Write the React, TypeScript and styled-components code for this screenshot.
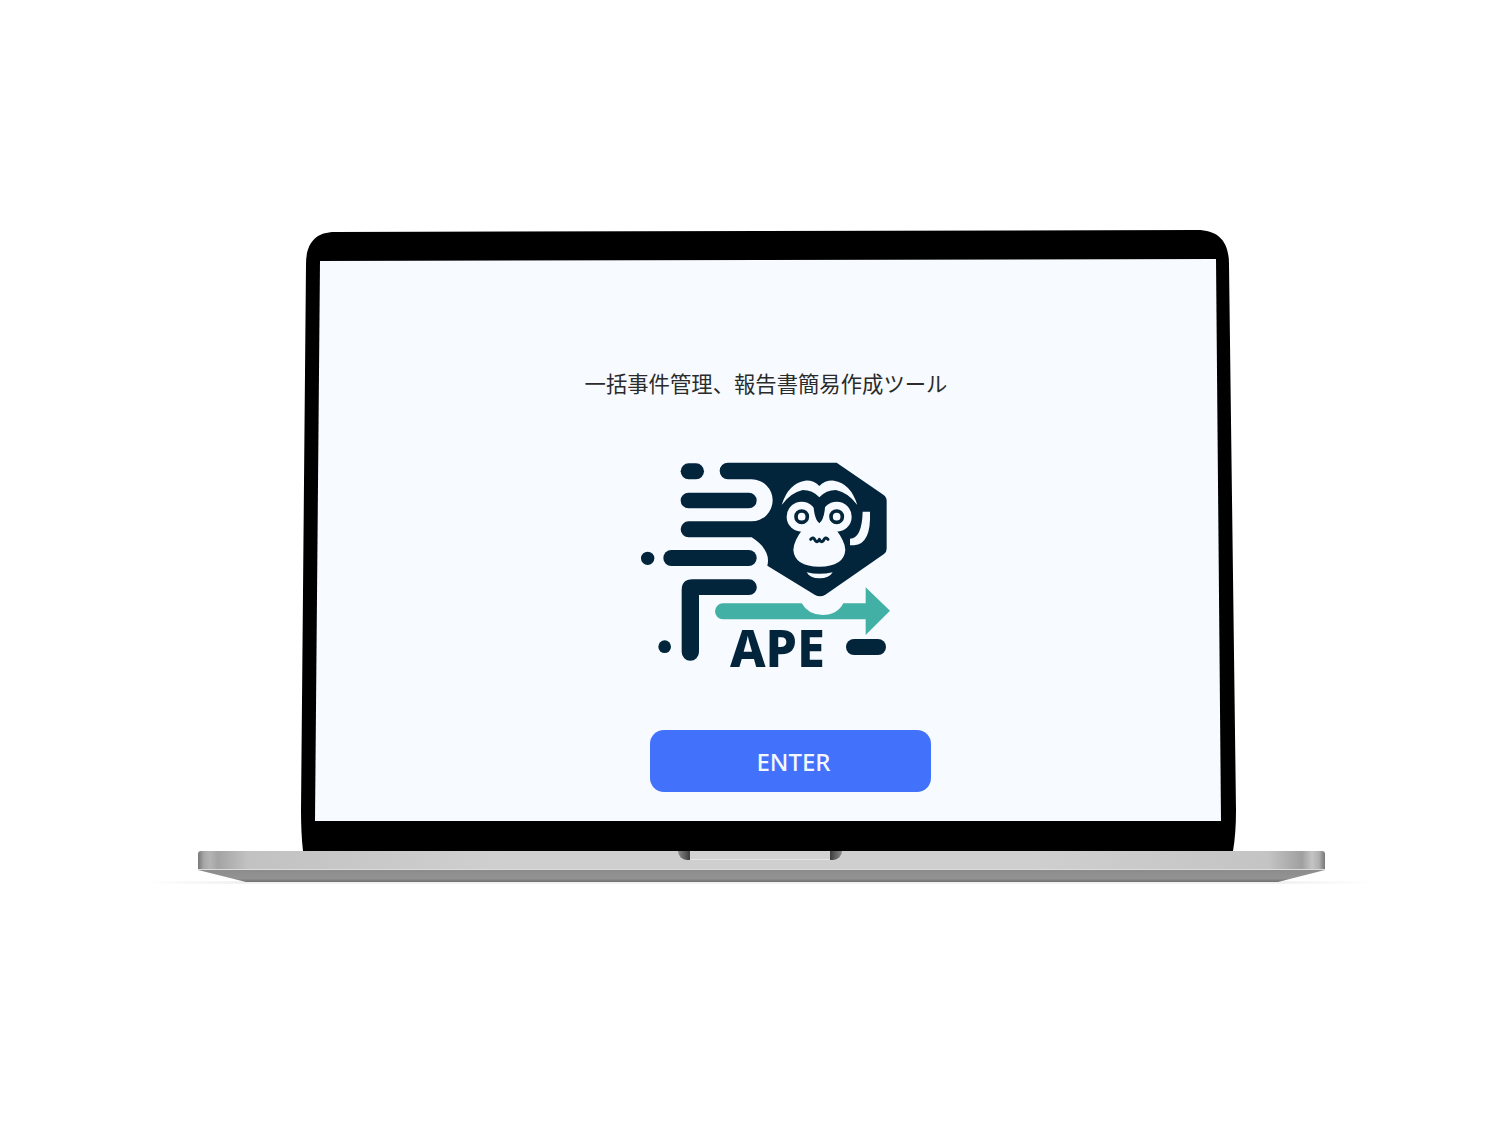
import React from 'react';
import styled, { createGlobalStyle } from 'styled-components';

const GlobalStyle = createGlobalStyle`
  html, body {
    margin: 0;
    padding: 0;
    background: #fff;
  }
`;

const NAVY = '#03253c';
const TEAL = '#43b0a6';
const SCREEN = '#f7fbff';

const ApeLogo: React.FC = () => (
  <LogoSvg viewBox="0 0 810 690" aria-label="APE logo">
    <g fill={NAVY}>
      <rect x="152" y="40" width="70" height="48" rx="24" />
      <rect x="152" y="128" width="228" height="47" rx="23.5" />
      <rect x="100" y="300" width="280" height="48" rx="24" />
      <circle cx="53" cy="325" r="20" />
      <circle cx="104" cy="590" r="19" />
      <rect x="648" y="567" width="120" height="48" rx="24" />
      <path d="M181 632 A26 26 0 0 1 155 606 V420 Q155 388 187 388 H357 A23.5 23.5 0 0 1 357 435 H207 V606 A26 26 0 0 1 181 632 Z" />
      <path d="M294 38 H620 L760 134 Q770 141 770 152 V296 Q770 306 762 312 L586 434 Q570 444 554 434 L412 347 Q424 300 365 262 H176 A24 24 0 0 1 176 214 H365 A63 63 0 0 0 365 88 H294 A25 25 0 0 1 294 38 Z" />
    </g>
    <path
      fill={TEAL}
      d="M279 460 H515 Q535 495 578 495 Q622 495 640 460 H707 V412 L780 482 L707 555 V508 H279 A24 24 0 0 1 279 460 Z"
    />
    <LogoText x="300" y="650" textLength="285" lengthAdjust="spacingAndGlyphs">APE</LogoText>
    <g transform="translate(420 60)">
      <g fill="#f7fbff">
        <path d="M35 105 Q55 40 105 32 Q130 30 148 48 Q166 30 192 32 Q242 40 262 105 Q235 68 198 60 Q168 60 148 82 Q128 60 98 60 Q62 68 35 105 Z" />
        <circle cx="95" cy="140" r="45" />
        <circle cx="200" cy="140" r="45" />
        <path d="M148 110 Q165 150 195 175 Q226 215 226 240 Q222 290 148 290 Q74 290 70 240 Q70 215 100 175 Q130 150 148 110 Z" />
        <path d="M110 307 Q148 316 188 307 Q178 325 148 325 Q120 325 110 307 Z" />
        <path d="M278 125 H300 Q304 222 252 226 H240 V206 Q276 204 278 125 Z" />
      </g>
      <path fill={NAVY} d="M148 84 Q128 98 132 122 Q136 150 148 160 Q160 150 164 122 Q168 98 148 84 Z" />
      <circle cx="95" cy="140" r="17" fill="none" stroke={NAVY} strokeWidth="11" />
      <circle cx="200" cy="140" r="17" fill="none" stroke={NAVY} strokeWidth="11" />
      <path
        fill="none"
        stroke={NAVY}
        strokeWidth="9"
        strokeLinecap="round"
        strokeLinejoin="round"
        d="M122 208 Q130 198 136 212 Q142 220 148 208 Q154 220 160 212 Q166 198 174 208"
      />
    </g>
  </LogoSvg>
);

const App: React.FC = () => (
  <Page>
    <GlobalStyle />
    <Laptop>
      <Lid>
        <Screen>
          <Tagline>一括事件管理、報告書簡易作成ツール</Tagline>
          <ApeLogo />
          <EnterButton type="button">ENTER</EnterButton>
        </Screen>
      </Lid>
      <Base>
        <BaseTop>
          <Notch>
            <NotchCorner $side="left" />
            <NotchBody />
            <NotchCorner $side="right" />
          </Notch>
        </BaseTop>
        <BaseBottom />
      </Base>
    </Laptop>
  </Page>
);

const Page = styled.div`
  box-sizing: border-box;
  height: 1126px;
  padding: 230px 0 0 198px;
  background: #fff;
  overflow: hidden;
`;

const Laptop = styled.div`
  display: flex;
  flex-direction: column;
  width: 1127px;
`;

const Lid = styled.div`
  box-sizing: border-box;
  width: 935px;
  height: 621px;
  margin-left: 103px;
  padding: 29px 15px 30px 14px;
  background: #000;
  clip-path: path('M34 2 L896 0 C918 0 928 12 928 34 L935 580 Q935 604 932 621 L2 621 Q0 604 0 580 L5 34 C5 14 14 2 34 2 Z');
`;

const Screen = styled.div`
  box-sizing: border-box;
  display: flex;
  flex-direction: column;
  align-items: center;
  height: 562px;
  padding-top: 109px;
  background: ${SCREEN};
  clip-path: polygon(5px 2px, 901px 0, 906px 562px, 0 562px);
`;

const Tagline = styled.h1`
  margin: 0 0 0 -4px;
  font-family: 'Noto Sans CJK JP', 'Noto Sans', sans-serif;
  font-size: 21.35px;
  line-height: 30px;
  font-weight: 400;
  color: #2b2b2b;
  white-space: nowrap;
`;

const LogoSvg = styled.svg`
  display: block;
  flex: none;
  width: 270px;
  height: 230px;
  margin: 52px 0 0 -6px;
`;

const LogoText = styled.text`
  font-family: 'Noto Sans', 'Open Sans', sans-serif;
  font-size: 153px;
  font-weight: 800;
  fill: ${NAVY};
`;

const EnterButton = styled.button`
  flex: none;
  width: 281px;
  height: 62px;
  margin: 50px 0 0 45px;
  padding: 0 0 0 6px;
  border: none;
  border-radius: 14px;
  background: #4272fb;
  color: #f4f7ff;
  font-family: 'Noto Sans', sans-serif;
  font-size: 24px;
  font-weight: 500;
  cursor: pointer;
`;

const Base = styled.div`
  position: relative;
  display: flex;
  flex-direction: column;
  height: 31px;

  &::after {
    content: '';
    position: absolute;
    left: -55px;
    right: -50px;
    bottom: -2px;
    height: 3px;
    background: linear-gradient(90deg, transparent, #f1f1f1 8%, #f1f1f1 92%, transparent);
    z-index: 0;
  }
`;

const BaseTop = styled.div`
  position: relative;
  z-index: 1;
  display: flex;
  justify-content: center;
  height: 19px;
  border-radius: 3px 3px 0 0;
  border-bottom: 1px solid #dcdcdc;
  box-sizing: border-box;
  background: linear-gradient(
    90deg,
    #787878 0,
    #a8a8a8 6px,
    #b4b4b4 12px,
    #a4a4a4 20px,
    #c2c2c2 50px,
    #cfcfcf 300px,
    #cfcfcf 830px,
    #c4c4c4 1070px,
    #a0a0a0 1104px,
    #c4c4c4 1114px,
    #b0b0b0 1121px,
    #777 1127px
  );
`;

const Notch = styled.div`
  display: flex;
  width: 164px;
  height: 9px;
  margin-left: -3px;
`;

const NotchCorner = styled.div<{ $side: 'left' | 'right' }>`
  flex: none;
  width: 12px;
  background: ${({ $side }) =>
    $side === 'left'
      ? 'linear-gradient(90deg, #8a8a8a, #3c3c3c)'
      : 'linear-gradient(90deg, #3c3c3c, #8a8a8a)'};
  border-radius: ${({ $side }) => ($side === 'left' ? '0 0 0 10px' : '0 0 10px 0')};
`;

const NotchBody = styled.div`
  flex: 1;
  background: #d2d2d2;
  border-bottom: 1px solid #e6e6e6;
`;

const BaseBottom = styled.div`
  position: relative;
  z-index: 1;
  height: 12px;
  background: linear-gradient(180deg, #8c8c8c 0, #939393 70%, #6f6f6f 100%);
  clip-path: polygon(0 0, 100% 0, 1080px 12px, 48px 12px);
`;

export default App;
